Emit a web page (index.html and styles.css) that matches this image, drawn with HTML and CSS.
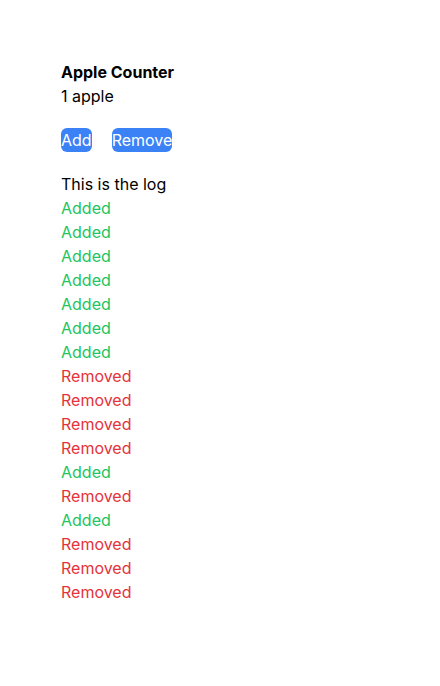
FILE: index.html
```html
<!DOCTYPE html>
<html>
<head>
<meta charset="utf-8">
<link rel="stylesheet" href="styles.css">
</head>
<body>
<div class="app">
  <div class="title">Apple Counter</div>
  <div class="count">1 apple</div>
  <div class="actions">
    <button class="btn">Add</button>
    <button class="btn">Remove</button>
  </div>
  <div class="log">
    <div>This is the log</div>
    <div class="added">Added</div>
    <div class="added">Added</div>
    <div class="added">Added</div>
    <div class="added">Added</div>
    <div class="added">Added</div>
    <div class="added">Added</div>
    <div class="added">Added</div>
    <div class="removed">Removed</div>
    <div class="removed">Removed</div>
    <div class="removed">Removed</div>
    <div class="removed">Removed</div>
    <div class="added">Added</div>
    <div class="removed">Removed</div>
    <div class="added">Added</div>
    <div class="removed">Removed</div>
    <div class="removed">Removed</div>
    <div class="removed">Removed</div>
  </div>
</div>
</body>
</html>
```
FILE: styles.css
```css
body {
  margin: 0;
  background: #fff;
  font-family: Inter, "Noto Sans", sans-serif;
  font-size: 16px;
  line-height: 24px;
  color: #000;
}
.app {
  padding: 60px 0 0 61px;
  display: flex;
  flex-direction: column;
}
.title {
  font-weight: 700;
}
.actions {
  display: flex;
  gap: 20px;
  margin: 20px 0;
}
.btn {
  font: inherit;
  line-height: 24px;
  height: 24px;
  padding: 0;
  border: 0;
  border-radius: 6px;
  background: #3b82f6;
  color: #fff;
}
.added {
  color: #22c55e;
}
.removed {
  color: #e5333b;
}
```
